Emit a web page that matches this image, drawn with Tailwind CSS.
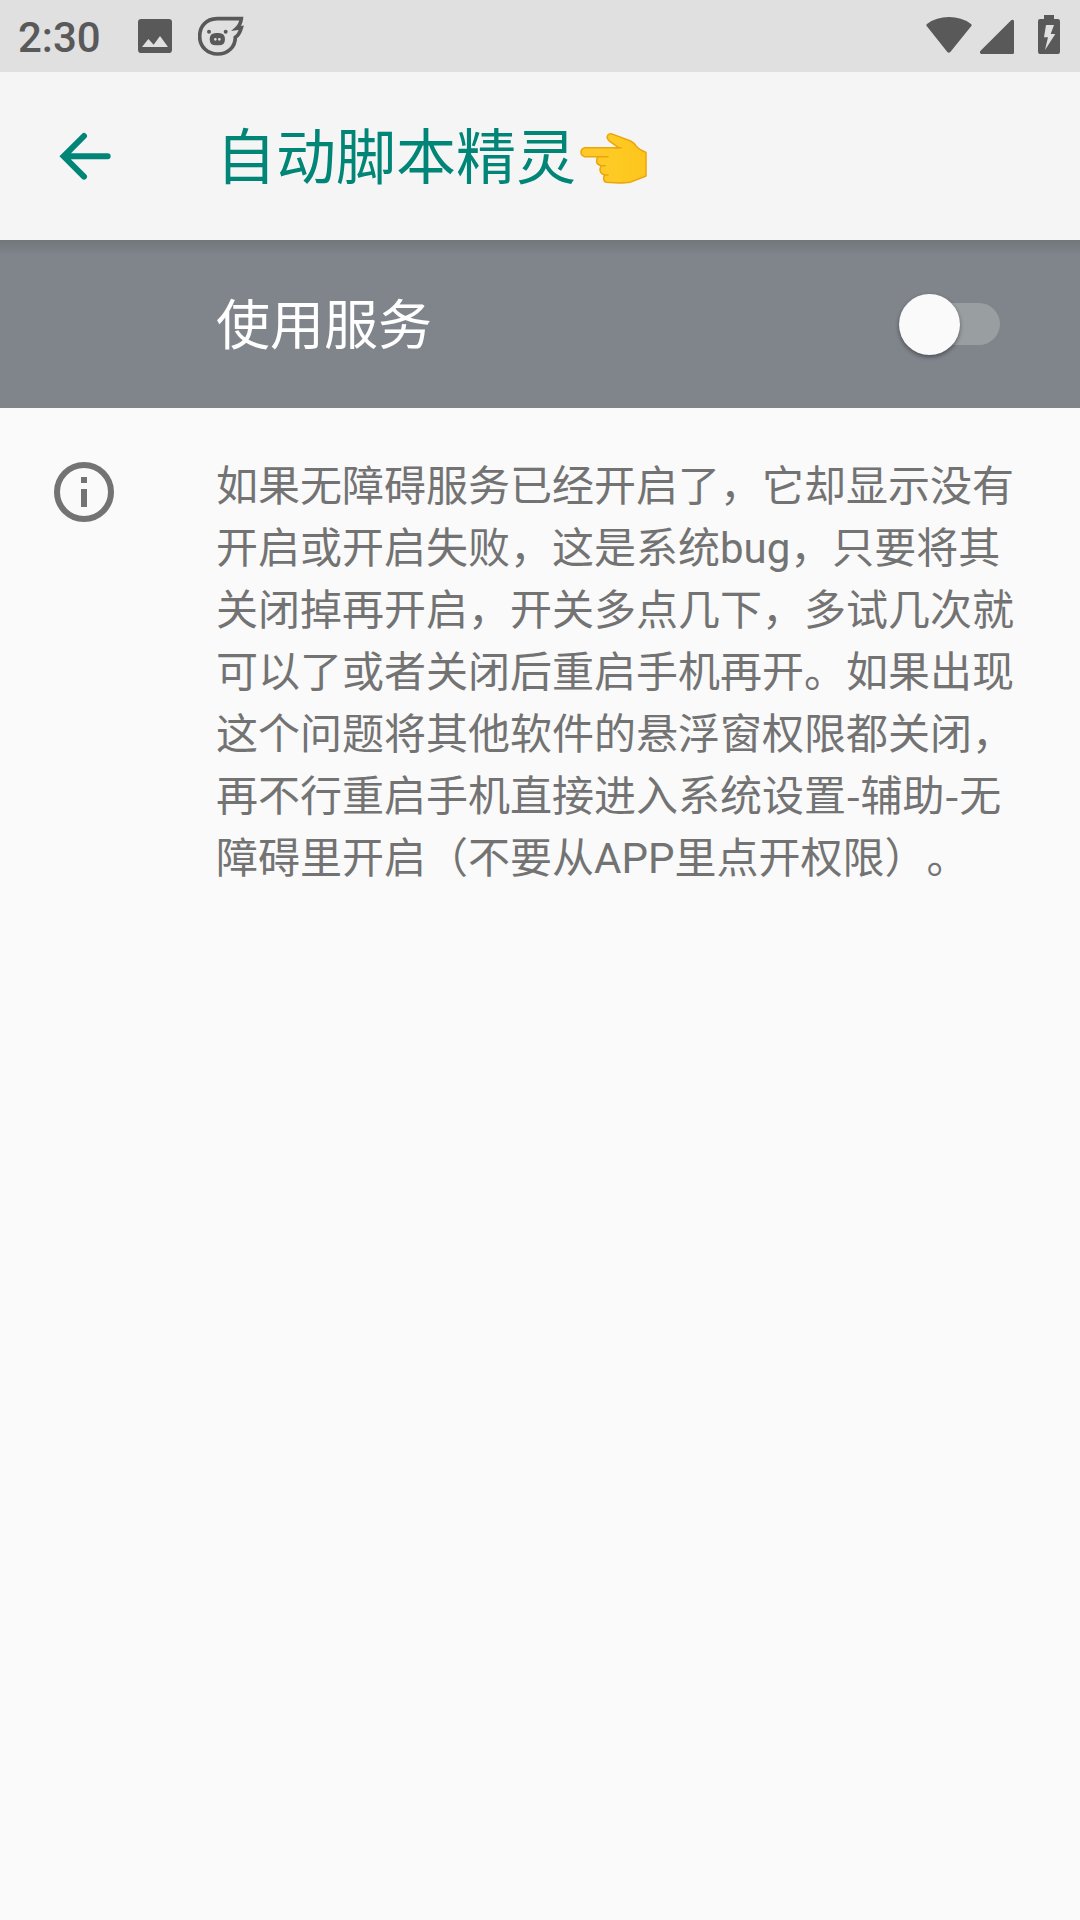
<!DOCTYPE html>
<html lang="zh-CN">
<head>
<meta charset="utf-8">
<title>自动脚本精灵</title>
<script src="https://cdn.jsdelivr.net/npm/@tailwindcss/browser@4"></script>
</head>
<body class="w-[1080px] h-[1920px] overflow-hidden bg-[#fafafa] font-['Roboto','Noto_Sans_CJK_SC',sans-serif] [text-spacing-trim:space-all]">
<div class="flex h-[72px] items-center justify-between bg-[#e0e0e0] pl-[18px] pr-5 text-[#595959]">
  <div class="flex items-center">
    <span class="w-[120px] text-[42px] leading-[72px] font-medium pt-[3px]">2:30</span>
    <svg class="h-[34px] w-[34px]" viewBox="0 0 102 102"><path fill="currentColor" fill-rule="evenodd" d="M10 0H92Q102 0 102 10V92Q102 102 92 102H10Q0 102 0 92V10Q0 0 10 0ZM12 84H90L66 51L47 77L31 60Z"/></svg>
    <svg class="ml-[26px] h-[40px] w-[46px]" viewBox="594 47 138 120">
      <path fill="none" stroke="currentColor" stroke-width="11" d="M651 55C617 56 599 79 599 108C599 139 622 161 653 161C684 161 706 140 706 111Q718 103 724 82L710 84Q722 73 724 55Z"/>
      <circle cx="627" cy="94" r="6" fill="currentColor"/><circle cx="677" cy="94" r="6" fill="currentColor"/>
      <path fill="currentColor" fill-rule="evenodd" d="M648 98H656Q675 98 675 116.500Q675 135 656 135H648Q629 135 629 116.500Q629 98 648 98ZM646 113a4 4 0 1 0 .1 8a4 4 0 1 0 -.1 -8ZM658 113a4 4 0 1 0 .1 8a4 4 0 1 0 -.1 -8Z"/>
    </svg>
  </div>
  <div class="flex items-start -mt-[4px]">
    <svg class="h-[40px] w-[46px]" viewBox="77 42 138 120"><path fill="currentColor" d="M79 78Q76 74 81 71Q108 51 146 51Q184 51 211 71Q216 74 213 78L150 156Q145 161 141 156Z"/></svg>
    <svg class="ml-2 h-[40px] w-[34px]" viewBox="240 42 102 120"><path fill="currentColor" d="M241 153L332 62Q336 58 340 60Q342 61 342 65V158Q342 162 338 162H244Q237 160 241 153Z"/></svg>
    <svg class="ml-6 h-[40px] w-[22px]" viewBox="414 42 66 120"><path fill="currentColor" fill-rule="evenodd" d="M432 45H462V57H474Q480 57 480 64V155Q480 162 474 162H420Q414 162 414 155V64Q414 57 420 57H432ZM438 75L432 112H444L435 150L466 102H452L462 75Z"/></svg>
  </div>
</div>
<header class="flex h-[168px] items-center bg-[#f5f5f5] pl-[59px] text-[#008577]">
  <svg class="mt-[2px] h-[50px] w-[54px]" viewBox="56 95 154 150"><path fill="none" stroke="currentColor" stroke-width="18" stroke-linecap="round" stroke-linejoin="miter" d="M198 168H76M127 107L66 168L127 229"/></svg>
  <h1 class="ml-[103px] pt-[5px] text-[60px] leading-[84px]">自动脚本精灵</h1>
  <svg class="ml-[2px] mt-[5px] h-[54px] w-[70px]" viewBox="54 66 210 162">
    <defs><linearGradient id="skin" x1="0" x2="1"><stop offset="0.3" stop-color="#ffca28"/><stop offset="0.65" stop-color="#fdc921"/><stop offset="1" stop-color="#ffc41f"/></linearGradient></defs>
    <path fill="url(#skin)" stroke="#eba60b" stroke-width="4.500" stroke-linejoin="round" d="M74 113H176L149 94Q138 84 143 76Q149 69 159 73L212 93Q221 98 229 109Q238 120 258 127V198L210 217Q199 219 176 219L139 217Q131 215 131 205Q131 200 134 195Q119 191 120 177L123 167Q108 163 110 150L113 140H74Q63 137 63 127Q63 116 74 113Z"/>
    <path fill="none" stroke="#eba60b" stroke-width="4.500" stroke-linecap="round" d="M164 113H184M112 140H144M122 167H136M133 195H144"/>
  </svg>
</header>
<div class="flex h-[168px] items-center justify-between bg-[#80848b] bg-linear-to-b from-[#70777a] from-0% via-[#80848b] via-9% to-[#80848b] pl-[216px] pr-20 text-white">
  <span class="pt-[6px] text-[54px] leading-[72px]">使用服务</span>
  <div class="relative flex h-[42px] w-[84px] rounded-full bg-[#999ea1]">
    <div class="absolute -left-[17.5px] -top-[9.5px] size-[61px] rounded-full bg-[#fafafa] shadow-[0_2px_4px_#00000066]"></div>
  </div>
</div>
<main class="flex pl-[54px] pt-[47px]">
  <svg class="mt-[7px] h-[60px] w-[60px] text-[#737373]" viewBox="0 0 60 60"><circle cx="30" cy="30" r="27" fill="none" stroke="currentColor" stroke-width="6"/><path fill="currentColor" d="M27 15h6v6h-6zM27 27h6v18h-6z"/></svg>
  <p class="ml-[102px] mt-px text-[42px] leading-[62px] whitespace-nowrap text-[#737373]">如果无障碍服务已经开启了，它却显示没有<br>开启或开启失败，这是系统bug，只要将其<br>关闭掉再开启，开关多点几下，多试几次就<br>可以了或者关闭后重启手机再开。如果出现<br>这个问题将其他软件的悬浮窗权限都关闭，<br>再不行重启手机直接进入系统设置<span class="font-['Noto_Sans_CJK_SC',sans-serif] leading-none">-</span>辅助<span class="font-['Noto_Sans_CJK_SC',sans-serif] leading-none">-</span>无<br>障碍里开启（不要从APP里点开权限）。</p>
</main>
</body>
</html>
